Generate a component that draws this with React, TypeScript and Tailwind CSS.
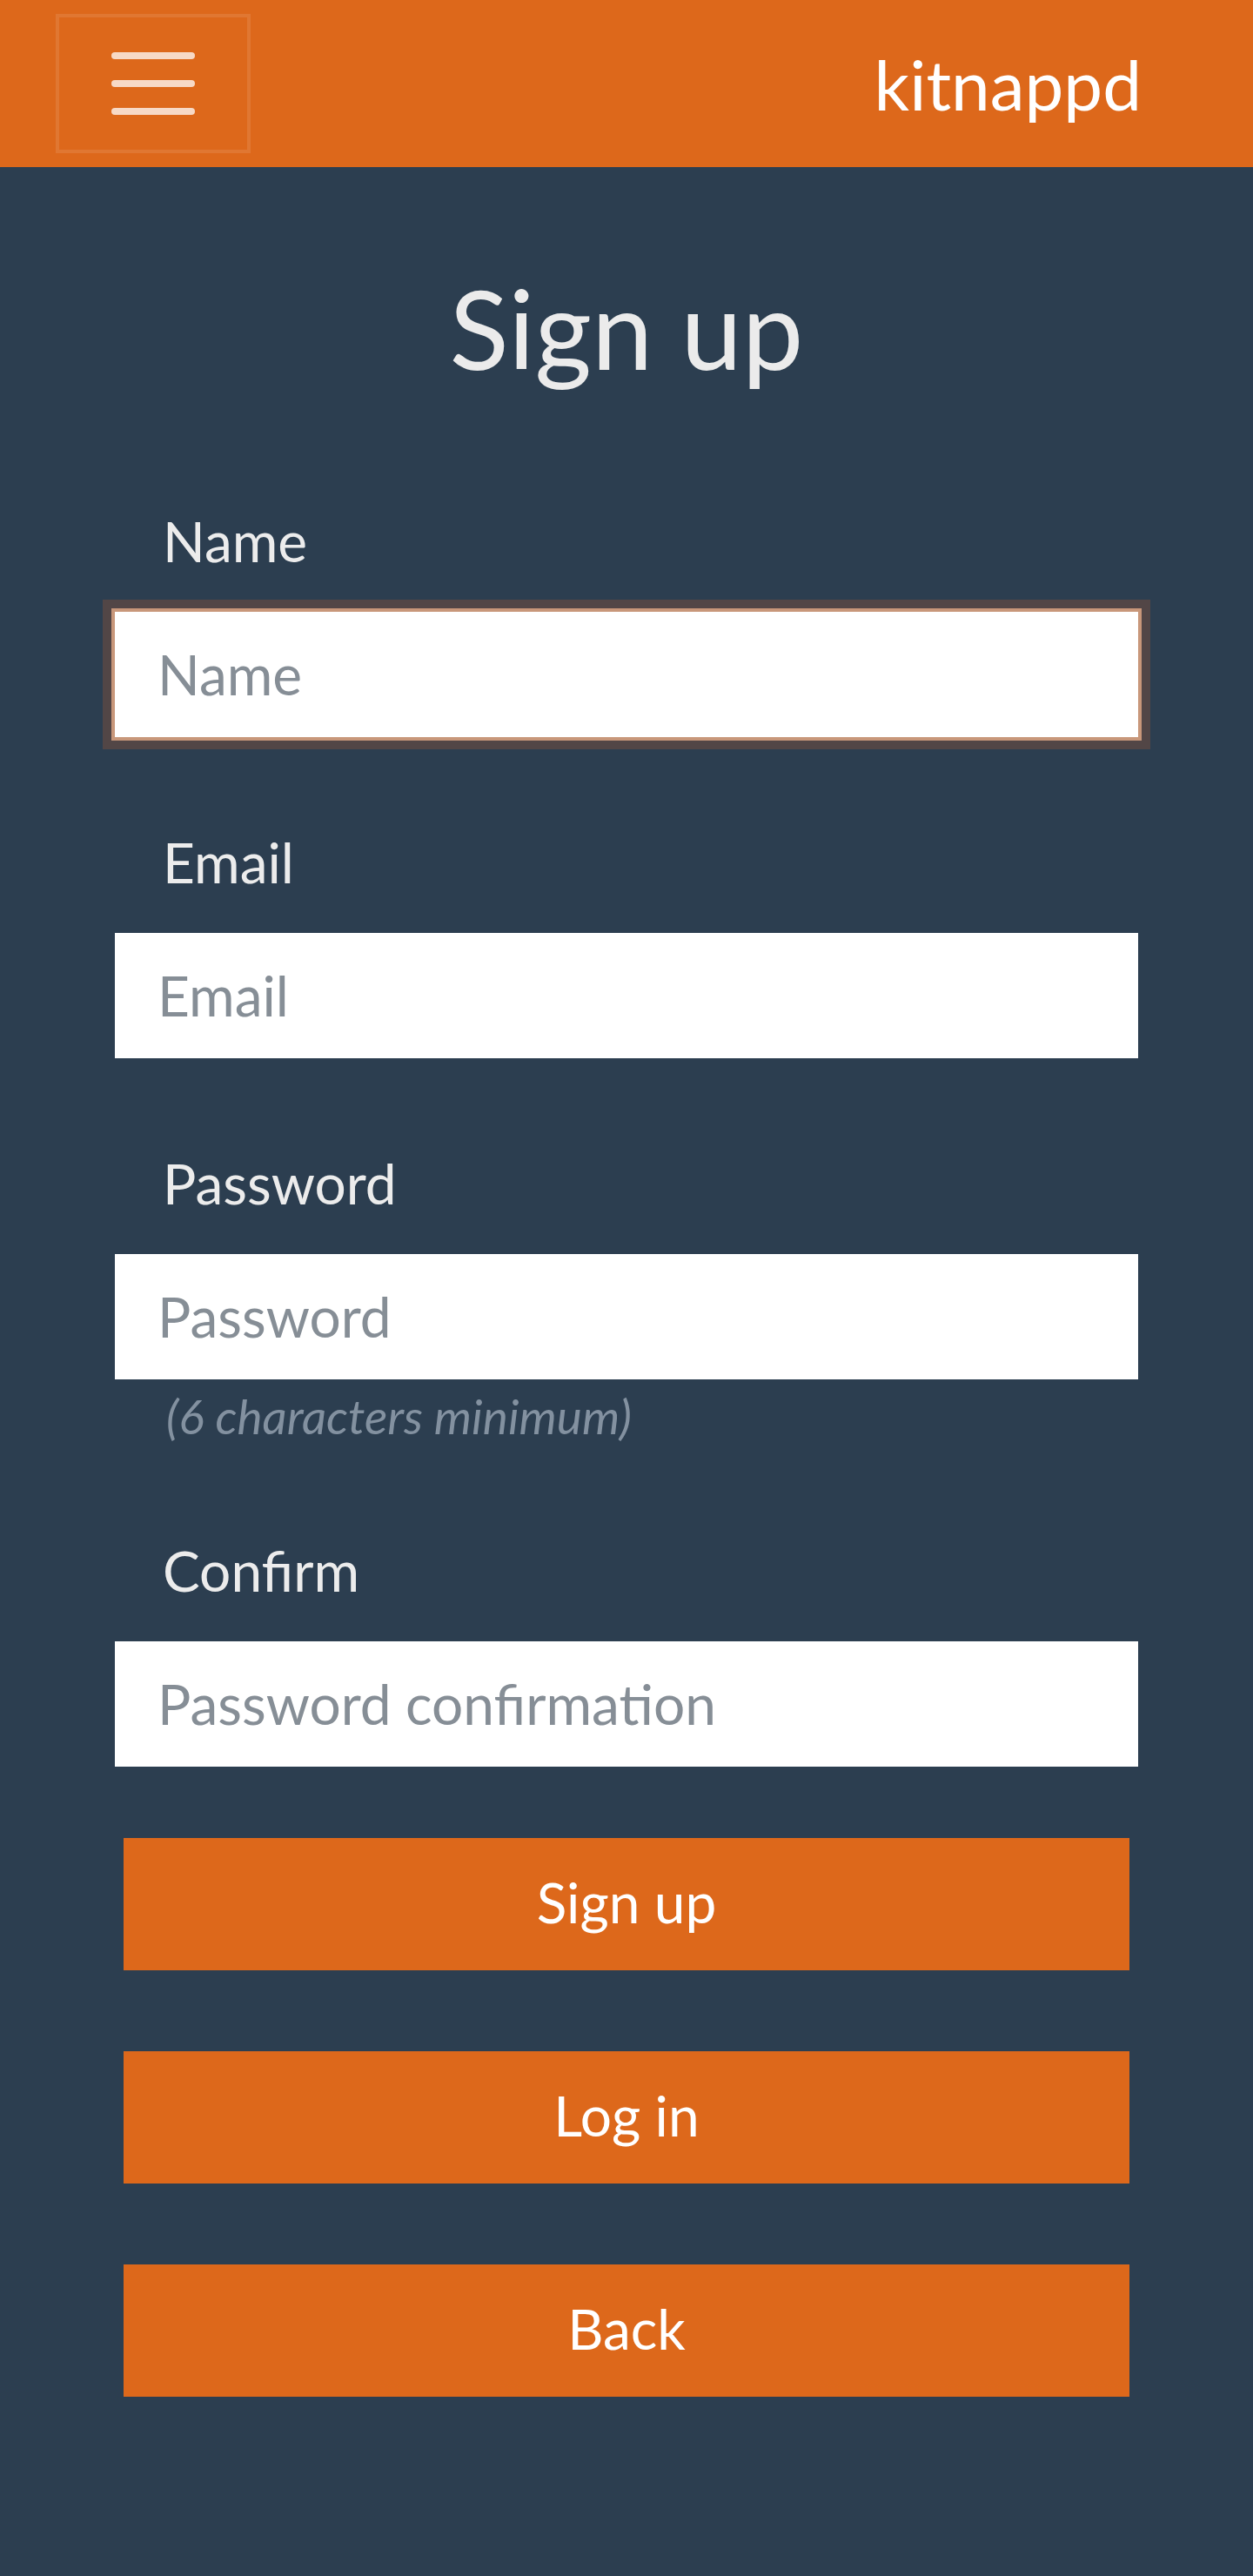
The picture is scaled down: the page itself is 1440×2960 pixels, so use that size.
import React from 'react';

const fields = [
  { label: 'Name', placeholder: 'Name', type: 'text', focused: true },
  { label: 'Email', placeholder: 'Email', type: 'email' },
  { label: 'Password', placeholder: 'Password', type: 'password', hint: '(6 characters minimum)' },
  { label: 'Confirm', placeholder: 'Password confirmation', type: 'password' },
];

const buttons = ['Sign up', 'Log in', 'Back'];

const App: React.FC = () => {
  return (
    <div className="min-h-[2960px] bg-[#2c3e50] font-['Lato','Open_Sans',sans-serif] text-[#ebebeb]">
      {/* Navbar */}
      <nav className="h-[192px] bg-[#dd681b] flex items-center justify-between pl-[64px] pr-[128px]">
        <button className="w-[224px] h-[160px] border-4 border-white/10 flex flex-col items-center justify-center gap-[24px]">
          <span className="block w-[96px] h-[8px] rounded-full bg-[#f7d9c6]"></span>
          <span className="block w-[96px] h-[8px] rounded-full bg-[#f7d9c6]"></span>
          <span className="block w-[96px] h-[8px] rounded-full bg-[#f7d9c6]"></span>
        </button>
        <span className="text-[80px] leading-[120px] text-white">kitnappd</span>
      </nav>

      <main className="px-[128px]">
        <h1 className="mt-[109px] text-center text-[126px] leading-[1.2] text-[#ebebeb]">Sign up</h1>

        <form className="mt-[120px]" onSubmit={(e) => e.preventDefault()}>
          {fields.map((f, i) => (
            <div key={f.label} className={i === 0 ? '' : f.label === 'Confirm' ? 'mt-[95px]' : 'mt-[90px]'}>
              <label className="block pl-[59px] text-[64px] leading-[99px] text-[#ececec]">{f.label}</label>
              <input
                type={f.type}
                placeholder={f.placeholder}
                className={`mt-[28px] block w-full h-[152px] bg-white border-4 px-[49px] pb-[2px] text-[64px] text-[#495057] placeholder:text-[#868e96] outline-none ${
                  f.focused ? 'border-[#c8977a] shadow-[0_0_0_10px_#524646]' : 'border-[#2c3e50]'
                }`}
              />
              {f.hint && (
                <p className="mt-[5px] pl-[63px] text-[55px] leading-[1.2] italic text-[#8391a0]">{f.hint}</p>
              )}
            </div>
          ))}

          <div className="mt-[78px] px-[14px] flex flex-col gap-[93px]">
            {buttons.map((b) => (
              <button key={b} type="button" className="h-[152px] w-full bg-[#dd681b] text-white text-[64px] pb-[4px]">
                {b}
              </button>
            ))}
          </div>
        </form>
      </main>
    </div>
  );
};

export default App;
